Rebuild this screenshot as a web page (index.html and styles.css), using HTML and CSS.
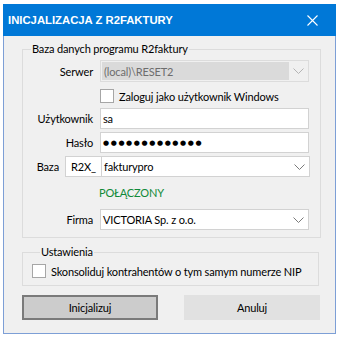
FILE: index.html
```html
<!DOCTYPE html>
<html lang="pl">
<head>
<meta charset="utf-8">
<title>Inicjalizacja z R2faktury</title>
<link rel="stylesheet" href="styles.css">
</head>
<body>
<div class="window">
  <div class="titlebar">
    <span class="title">INICJALIZACJA Z R2FAKTURY</span>
    <svg class="close" width="11" height="11" viewBox="0 0 11 11"><path d="M0.5 0.5 L10.5 10.5 M10.5 0.5 L0.5 10.5" stroke="#fff" stroke-width="1.1" fill="none"/></svg>
  </div>
  <div class="content">
    <fieldset class="group db">
      <legend>Baza danych programu R2faktury</legend>
      <div class="row r-serwer">
        <span class="lbl">Serwer</span>
        <div class="combo disabled"><span class="val">(local)\RESET2</span><span class="arrow"><svg width="11" height="6" viewBox="0 0 11 6"><path d="M0.5 0.5 L5.5 5.5 L10.5 0.5" stroke="#b4b4b4" fill="none"/></svg></span></div>
      </div>
      <div class="row r-check">
        <span class="cb"></span><span class="cbtext">Zaloguj jako użytkownik Windows</span>
      </div>
      <div class="row r-user">
        <span class="lbl">Użytkownik</span>
        <div class="textbox"><span class="val">sa</span></div>
      </div>
      <div class="row r-pass">
        <span class="lbl">Hasło</span>
        <div class="textbox"><span class="val dots">●●●●●●●●●●●●●</span></div>
      </div>
      <div class="row r-baza">
        <span class="lbl short">Baza</span>
        <span class="prefix">R2X_</span>
        <div class="combo wide"><span class="val">fakturypro</span><span class="arrow"><svg width="11" height="6" viewBox="0 0 11 6"><path d="M0.5 0.5 L5.5 5.5 L10.5 0.5" stroke="#7a7a7a" fill="none"/></svg></span></div>
      </div>
      <div class="row r-status">
        <span class="status">POŁĄCZONY</span>
      </div>
      <div class="row r-firma">
        <span class="lbl">Firma</span>
        <div class="combo"><span class="val">VICTORIA Sp. z o.o.</span><span class="arrow"><svg width="11" height="6" viewBox="0 0 11 6"><path d="M0.5 0.5 L5.5 5.5 L10.5 0.5" stroke="#7a7a7a" fill="none"/></svg></span></div>
      </div>
    </fieldset>
    <fieldset class="group settings">
      <legend>Ustawienia</legend>
      <div class="row r-cons">
        <span class="cb"></span><span class="cbtext">Skonsoliduj kontrahentów o tym samym numerze NIP</span>
      </div>
    </fieldset>
    <div class="buttons">
      <button class="btn default">Inicjalizuj</button>
      <button class="btn">Anuluj</button>
    </div>
  </div>
</div>
</body>
</html>
```

FILE: styles.css
```css
html, body {
  margin: 0;
  padding: 0;
  background: #ffffff;
}
body {
  font-family: Lato, "Liberation Sans", sans-serif;
  font-size: 11px;
  letter-spacing: -0.15px;
  color: #000;
}
.window {
  box-sizing: border-box;
  margin: 4px 0 0 3px;
  width: 333px;
  height: 330px;
  border: 1px solid #7d9fd6;
  border-top: none;
  background: #f0f0f0;
  display: flex;
  flex-direction: column;
}
.titlebar {
  height: 32px;
  margin: 0 -1px;
  background: #0078d7;
  display: flex;
  align-items: center;
  justify-content: space-between;
  padding: 0 18px 0 5px;
}
.title {
  color: #fff;
  font-family: "Liberation Sans", Arial, sans-serif;
  font-weight: bold;
  font-size: 11.3px;
  letter-spacing: 0;
}
.close {
  display: block;
}
.content {
  padding: 5px 0 0 18px;
  display: flex;
  flex-direction: column;
}
.group {
  margin: 0;
  width: 297px;
  box-sizing: border-box;
  border: 1px solid #dcdcdc;
  padding: 0;
}
.group legend {
  margin-left: 8px;
  padding: 0 1px;
  line-height: 16px;
  height: 16px;
}
.db {
  padding: 3px 10px 5px 0;
  height: 197px;
}
.row {
  display: flex;
  align-items: center;
}
.lbl {
  width: 70px;
  text-align: right;
  margin-right: 7px;
  flex: none;
}
.lbl.short {
  width: 36px;
  margin-right: 6px;
}
.combo, .textbox {
  box-sizing: border-box;
  height: 21px;
  width: 209px;
  border: 1px solid #d2d2d2;
  background: #fff;
  display: flex;
  align-items: center;
}
.combo.wide {
  width: 208px;
  border-left: none;
}
.val {
  flex: 1;
  padding-left: 2px;
  white-space: nowrap;
}
.arrow {
  width: 19px;
  height: 100%;
  display: flex;
  align-items: center;
  justify-content: center;
}
.combo.disabled {
  height: 22px;
  background: #f0f0f0;
  border-color: #dcdcdc;
}
.combo.disabled .val {
  background: #dadada;
  color: #6d6d6d;
  align-self: stretch;
  display: flex;
  align-items: center;
  margin: 1px 0 1px 1px;
}
.prefix {
  box-sizing: border-box;
  height: 21px;
  width: 37px;
  border: 1px solid #d2d2d2;
  background: #fff;
  display: flex;
  align-items: center;
  justify-content: center;
}
.dots {
  font-family: "DejaVu Sans", sans-serif;
  font-size: 7px;
  letter-spacing: 1.6px;
}
.r-check {
  margin: 7px 0 0 77px;
  height: 14px;
}
.cb {
  box-sizing: border-box;
  width: 14px;
  height: 14px;
  border: 1px solid #a6a6a6;
  background: #fff;
  margin-right: 5px;
  flex: none;
}
.cbtext {
  white-space: nowrap;
}
.r-user {
  margin-top: 5px;
}
.r-pass {
  margin-top: 3px;
}
.r-baza {
  margin-top: 3px;
}
.r-status {
  margin: 5px 0 0 76px;
  height: 20px;
}
.status {
  color: #108a38;
}
.r-firma {
  margin-top: 7px;
}
.settings {
  margin-top: 6px;
  height: 42px;
  padding: 0 0 0 9px;
}
.r-cons {
  margin-top: 4px;
}
.buttons {
  display: flex;
  justify-content: space-between;
  width: 298px;
  margin-top: 9px;
}
.btn {
  box-sizing: border-box;
  width: 136px;
  height: 25px;
  font-family: inherit;
  font-size: 11px;
  letter-spacing: -0.15px;
  color: #000;
  background: #e1e1e1;
  border: 1px solid #e1e1e1;
  padding: 0;
}
.btn.default {
  background: #cccccc;
  border: 2px solid #7a7a7a;
}
```
